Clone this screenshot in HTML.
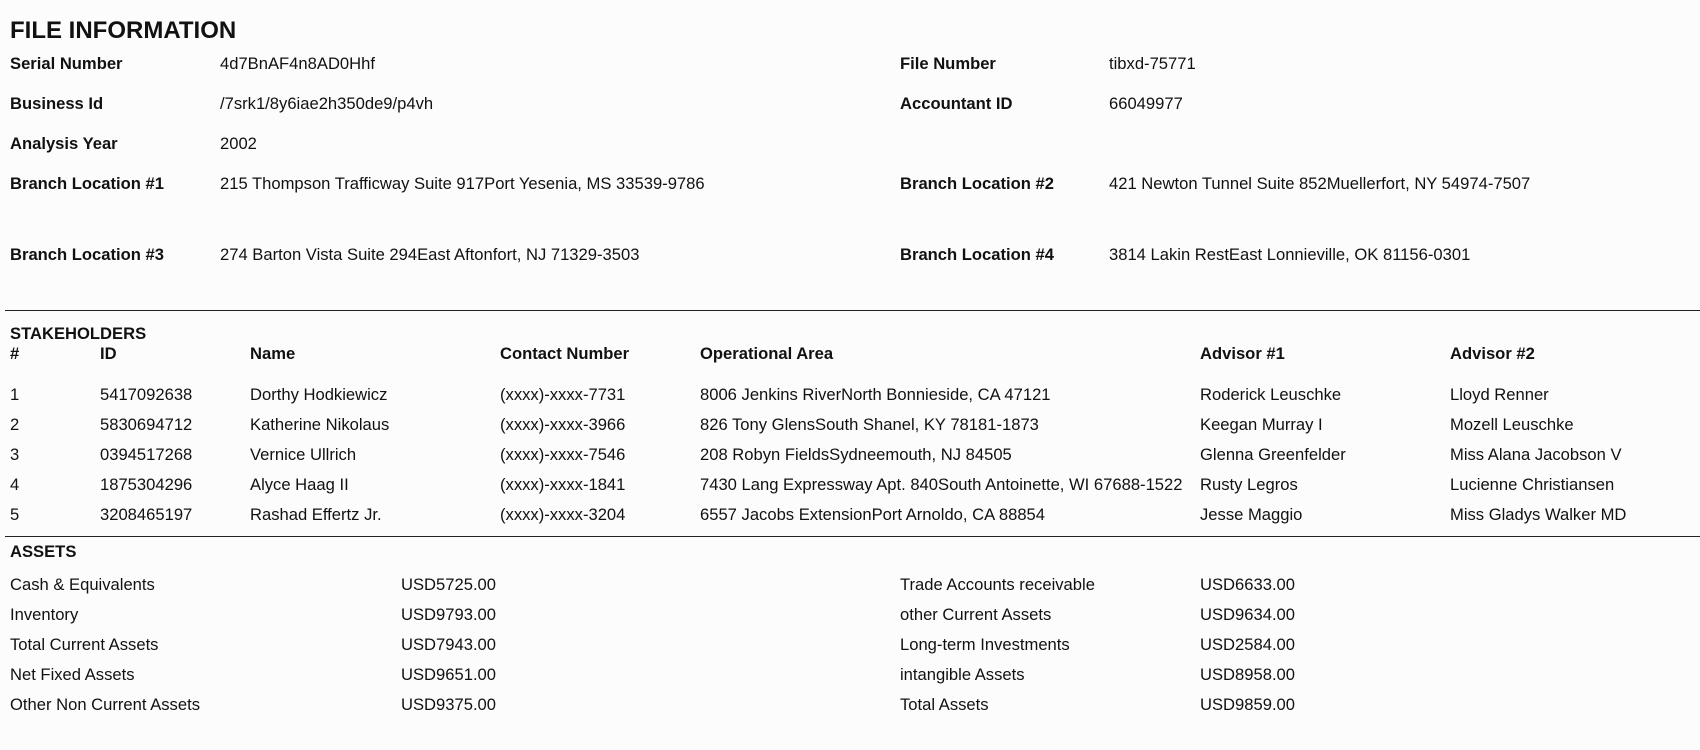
<!DOCTYPE html>
<html><head><meta charset="utf-8"><style>
html,body{margin:0;padding:0;}
body{width:1700px;height:750px;background:#fcfcfc;position:relative;overflow:hidden;font-family:"Liberation Sans",sans-serif;color:#111;font-size:16.6px;}
.t{position:absolute;line-height:20px;white-space:nowrap;margin-top:1px;}
.b{font-weight:bold;}
.h{position:absolute;left:5px;right:0;height:1px;background:#222;}
</style></head><body>
<div class="t b" style="left:10px;top:17px;font-size:24px;line-height:26px;">FILE INFORMATION</div>

<div class="t b" style="left:10px;top:53px">Serial Number</div>
<div class="t" style="left:220px;top:53px">4d7BnAF4n8AD0Hhf</div>
<div class="t b" style="left:900px;top:53px">File Number</div>
<div class="t" style="left:1109px;top:53px">tibxd-75771</div>

<div class="t b" style="left:10px;top:93px">Business Id</div>
<div class="t" style="left:220px;top:93px">/7srk1/8y6iae2h350de9/p4vh</div>
<div class="t b" style="left:900px;top:93px">Accountant ID</div>
<div class="t" style="left:1109px;top:93px">66049977</div>

<div class="t b" style="left:10px;top:133px">Analysis Year</div>
<div class="t" style="left:220px;top:133px">2002</div>

<div class="t b" style="left:10px;top:173px">Branch Location #1</div>
<div class="t" style="left:220px;top:173px">215 Thompson Trafficway Suite 917Port Yesenia, MS 33539-9786</div>
<div class="t b" style="left:900px;top:173px">Branch Location #2</div>
<div class="t" style="left:1109px;top:173px">421 Newton Tunnel Suite 852Muellerfort, NY 54974-7507</div>

<div class="t b" style="left:10px;top:244px">Branch Location #3</div>
<div class="t" style="left:220px;top:244px">274 Barton Vista Suite 294East Aftonfort, NJ 71329-3503</div>
<div class="t b" style="left:900px;top:244px">Branch Location #4</div>
<div class="t" style="left:1109px;top:244px">3814 Lakin RestEast Lonnieville, OK 81156-0301</div>

<div class="h" style="top:310px"></div>

<div class="t b" style="left:10px;top:323px">STAKEHOLDERS</div>
<div class="t b" style="left:10px;top:343px">#</div>
<div class="t b" style="left:100px;top:343px">ID</div>
<div class="t b" style="left:250px;top:343px">Name</div>
<div class="t b" style="left:500px;top:343px">Contact Number</div>
<div class="t b" style="left:700px;top:343px">Operational Area</div>
<div class="t b" style="left:1200px;top:343px">Advisor #1</div>
<div class="t b" style="left:1450px;top:343px">Advisor #2</div>

<div class="t" style="left:10px;top:384px">1</div><div class="t" style="left:100px;top:384px">5417092638</div><div class="t" style="left:250px;top:384px">Dorthy Hodkiewicz</div><div class="t" style="left:500px;top:384px">(xxxx)-xxxx-7731</div><div class="t" style="left:700px;top:384px">8006 Jenkins RiverNorth Bonnieside, CA 47121</div><div class="t" style="left:1200px;top:384px">Roderick Leuschke</div><div class="t" style="left:1450px;top:384px">Lloyd Renner</div>
<div class="t" style="left:10px;top:414px">2</div><div class="t" style="left:100px;top:414px">5830694712</div><div class="t" style="left:250px;top:414px">Katherine Nikolaus</div><div class="t" style="left:500px;top:414px">(xxxx)-xxxx-3966</div><div class="t" style="left:700px;top:414px">826 Tony GlensSouth Shanel, KY 78181-1873</div><div class="t" style="left:1200px;top:414px">Keegan Murray I</div><div class="t" style="left:1450px;top:414px">Mozell Leuschke</div>
<div class="t" style="left:10px;top:444px">3</div><div class="t" style="left:100px;top:444px">0394517268</div><div class="t" style="left:250px;top:444px">Vernice Ullrich</div><div class="t" style="left:500px;top:444px">(xxxx)-xxxx-7546</div><div class="t" style="left:700px;top:444px">208 Robyn FieldsSydneemouth, NJ 84505</div><div class="t" style="left:1200px;top:444px">Glenna Greenfelder</div><div class="t" style="left:1450px;top:444px">Miss Alana Jacobson V</div>
<div class="t" style="left:10px;top:474px">4</div><div class="t" style="left:100px;top:474px">1875304296</div><div class="t" style="left:250px;top:474px">Alyce Haag II</div><div class="t" style="left:500px;top:474px">(xxxx)-xxxx-1841</div><div class="t" style="left:700px;top:474px">7430 Lang Expressway Apt. 840South Antoinette, WI 67688-1522</div><div class="t" style="left:1200px;top:474px">Rusty Legros</div><div class="t" style="left:1450px;top:474px">Lucienne Christiansen</div>
<div class="t" style="left:10px;top:504px">5</div><div class="t" style="left:100px;top:504px">3208465197</div><div class="t" style="left:250px;top:504px">Rashad Effertz Jr.</div><div class="t" style="left:500px;top:504px">(xxxx)-xxxx-3204</div><div class="t" style="left:700px;top:504px">6557 Jacobs ExtensionPort Arnoldo, CA 88854</div><div class="t" style="left:1200px;top:504px">Jesse Maggio</div><div class="t" style="left:1450px;top:504px">Miss Gladys Walker MD</div>

<div class="h" style="top:536px"></div>

<div class="t b" style="left:10px;top:541px">ASSETS</div>
<div class="t" style="left:10px;top:574px">Cash &amp; Equivalents</div><div class="t" style="left:401px;top:574px">USD5725.00</div><div class="t" style="left:900px;top:574px">Trade Accounts receivable</div><div class="t" style="left:1200px;top:574px">USD6633.00</div>
<div class="t" style="left:10px;top:604px">Inventory</div><div class="t" style="left:401px;top:604px">USD9793.00</div><div class="t" style="left:900px;top:604px">other Current Assets</div><div class="t" style="left:1200px;top:604px">USD9634.00</div>
<div class="t" style="left:10px;top:634px">Total Current Assets</div><div class="t" style="left:401px;top:634px">USD7943.00</div><div class="t" style="left:900px;top:634px">Long-term Investments</div><div class="t" style="left:1200px;top:634px">USD2584.00</div>
<div class="t" style="left:10px;top:664px">Net Fixed Assets</div><div class="t" style="left:401px;top:664px">USD9651.00</div><div class="t" style="left:900px;top:664px">intangible Assets</div><div class="t" style="left:1200px;top:664px">USD8958.00</div>
<div class="t" style="left:10px;top:694px">Other Non Current Assets</div><div class="t" style="left:401px;top:694px">USD9375.00</div><div class="t" style="left:900px;top:694px">Total Assets</div><div class="t" style="left:1200px;top:694px">USD9859.00</div>
</body></html>
